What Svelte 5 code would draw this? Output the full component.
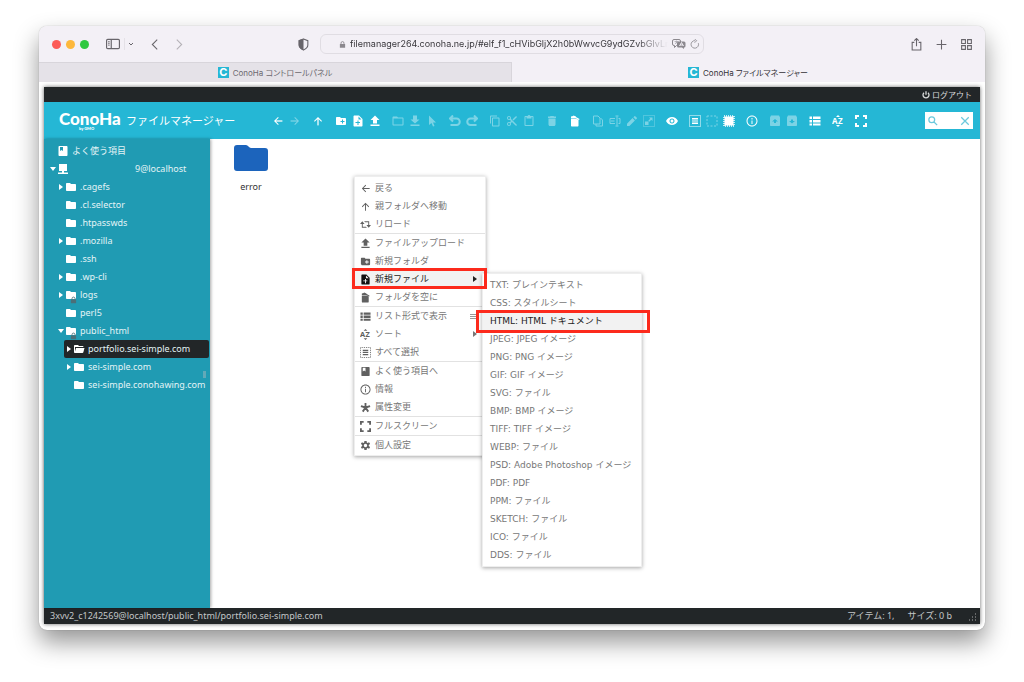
<script lang="ts">
  type Shape = { d?: string; line?: string; width?: number; dash?: string };

  const icons: Record<string, Shape> = {
    back: { d: 'M21 11H7.83l5.59-5.59L12 4l-8 8 8 8 1.41-1.41L7.83 13H21v-2z', line: 'M7 12h13', width: 1 },
    forward: { d: 'M12 4l-1.41 1.41L16.17 11H3v2h13.17l-5.58 5.59L12 20l8-8z', line: 'M4 12h13', width: 1 },
    up: { d: 'M4 12l1.41 1.41L11 7.83V21h2V7.83l5.58 5.59L20 12l-8-8-8 8z', line: 'M12 7v13', width: 1 },
    reload: { d: 'M5 5L0 11h4v8h11l-2-2H6v-6h4zM9 5l2 2h7v6h-4l5 6 5-6h-4V5z' },
    mkdir: {
      d: 'M20 6h-8l-2-2H4c-1.1 0-2 .9-2 2v12c0 1.1.9 2 2 2h16c1.1 0 2-.9 2-2V8c0-1.1-.9-2-2-2zm-1 8h-3v3h-2v-3h-3v-2h3V9h2v3h3v2z'
    },
    mkfile: {
      d: 'M14 1H5c-1.1 0-2 .9-2 2v18c0 1.1.9 2 2 2h14c1.1 0 2-.9 2-2V8l-7-7zm2 15h-3v4h-2v-4H7v-2h4v-3h2v3h3v2zm-3-7V3l6 6h-6z'
    },
    upload: { d: 'M3 22h18v-3H3v3zm5-5h8v-7h5l-9-9-9 9h5v7z' },
    open: {
      d: 'M21 5h-9l-2-2H3c-1.1 0-2 .9-2 2v14c0 1.1.9 2 2 2h18c1.1 0 2-.9 2-2V7c0-1.1-.9-2-2-2zm0 14H3V7h18v12z'
    },
    download: { d: 'M21 9h-5V1H8v8H3l9 8 9-8zM3 19v3h18v-3H3z' },
    cursor: { d: 'M6 1v19l5-4 3 7 3-1-3-7h6z' },
    undo: { line: 'M2 7h13a5 5 0 010 13H3M8 1L2 7l6 6', width: 4 },
    redo: { line: 'M22 7H9a5 5 0 000 13h12M16 1l6 6-6 6', width: 4 },
    copy: {
      d: 'M16 1H4c-1.1 0-2 .9-2 2v14h2V3h12V1zm3 4H8c-1.1 0-2 .9-2 2v14c0 1.1.9 2 2 2h11c1.1 0 2-.9 2-2V7c0-1.1-.9-2-2-2zm0 16H8V7h11v14z'
    },
    cut: {
      d: 'M9.64 7.64c.23-.5.36-1.05.36-1.64 0-2.21-1.79-4-4-4S2 3.79 2 6s1.79 4 4 4c.59 0 1.14-.13 1.64-.36L10 12l-2.36 2.36C7.14 14.13 6.59 14 6 14c-2.21 0-4 1.79-4 4s1.79 4 4 4 4-1.79 4-4c0-.59-.13-1.14-.36-1.64L12 14l7 7h3v-1L9.64 7.64zM6 8c-1.1 0-2-.89-2-2s.9-2 2-2 2 .89 2 2-.9 2-2 2zm0 12c-1.1 0-2-.89-2-2s.9-2 2-2 2 .89 2 2-.9 2-2 2zM19 3l-6 6 2 2 7-7V3z'
    },
    paste: {
      d: 'M19 2h-4.18C14.4.84 13.3 0 12 0s-2.4.84-2.82 2H5c-1.1 0-2 .9-2 2v16c0 1.1.9 2 2 2h14c1.1 0 2-.9 2-2V4c0-1.1-.9-2-2-2zm0 18H5V4h2v3h10V4h2v16z'
    },
    trash: { d: 'M5 19c0 1.7 1.3 3 3 3h8c1.7 0 3-1.3 3-3V7H5v12zM20 3h-4l-1-1H9L8 3H4v3h16V3z' },
    empty: { d: 'M4 8h11l4 2v11c0 1.1-.9 2-2 2H6c-1.1 0-2-.9-2-2zM4 3l4-1 1-1 5 2v1l7 4-1 2-6-3H4z' },
    duplicate: { line: 'M3 18V2h9l4 4v12zM8 18v4h13V10l-4-4', width: 2 },
    rename: { line: 'M12 7H2v10h10M4 12h7M16 3v18M13 2h6M13 22h6M19 7h3v10h-3', width: 2 },
    edit: {
      d: 'M2 17.25V22h4.75L17.81 10.94l-4.75-4.75L2 17.25zM21.7 7.04c.4-.39.4-1.02 0-1.41l-3.3-3.34c-.4-.39-1-.39-1.4 0l-2.3 2.33 4.7 4.75 2.3-2.33z'
    },
    resize: { line: 'M1 1h22v22H1z', dash: '2 2', width: 2, d: 'M12 5h7v7l-2.5-2.500-4 4-2-2 4-4zM4 13h7v7H4z' },
    eye: {
      d: 'M12 4C7 4 2.7 7.1 0 12c2.7 4.9 7 8 12 8s9.3-3.1 12-8c-2.7-4.9-7-8-12-8zm0 13c-2.760 0-5-2.240-5-5s2.240-5 5-5 5 2.240 5 5-2.240 5-5 5zm0-8c-1.660 0-3 1.340-3 3s1.340 3 3 3 3-1.340 3-3-1.340-3-3-3z'
    },
    selectall: { line: 'M1 1h22v22H1z', dash: '2 2', width: 2, d: 'M6 6h12v3H6zM6 11h12v2H6zM6 15h12v3H6z' },
    selectnone: { line: 'M2 2h20v20H2z', dash: '4 3', width: 2 },
    invert: { line: 'M2 2h20v20H2z', dash: '2 2', width: 3, d: 'M3 3h18v18H3z' },
    info: {
      d: 'M11 6h2v3h-2zm0 5h2v7h-2zm1-10C5.9 1 1 5.900 1 12s4.900 11 11 11 11-4.900 11-11S18.100 1 12 1zm0 20c-5 0-9-4-9-9s4-9 9-9 9 4 9 9-4 9-9 9z'
    },
    extract: { d: 'M4 1h16l2 4v15c0 1.100-.9 2-2 2H4c-1.100 0-2-.9-2-2V5zM12 8l-6 5h4v3h4v-3h4z' },
    archive: { d: 'M4 1h16l2 4v15c0 1.100-.9 2-2 2H4c-1.100 0-2-.9-2-2V5zM12 17l6-5h-4V9h-4v3H6z' },
    list: { d: 'M1 3h5v5H1zM8 3h15v5H8zM1 10h5v5H1zM8 10h15v5H8zM1 17h5v4H1zM8 17h15v4H8z' },
    fullscreen: { line: 'M2 8V2h6M16 2h6v6M22 16v6h-6M8 22H2v-6', width: 4 },
    book: { d: 'M19 2H5c-1.100 0-2 .9-2 2v16c0 1.100.9 2 2 2h14c1.100 0 2-.9 2-2V4c0-1.100-.9-2-2-2zM6 4h6v8l-3-2-3 2z' },
    host: { d: 'M4 2h16v14H4zM10 16h4v3h8v3H2v-3h8z' },
    folder: { d: 'M10 4H4c-1.1 0-2 .9-2 2v12c0 1.1.9 2 2 2h16c1.1 0 2-.9 2-2V8c0-1.1-.9-2-2-2h-8l-2-2z' },
    folderopen: {
      d: 'M19 20H4c-1.100 0-2-.9-2-2V6c0-1.100.9-2 2-2h6l2 2h7c1.100 0 2 .9 2 2H4v9l2-7h17l-2.300 8.500c-.2.9-1 1.500-1.700 1.500z'
    },
    star: { line: 'M12 12V2M12 12L2 9M12 12l10-3M12 12L6 21M12 12l6 9', width: 4 },
    gear: {
      d: 'M19.14 12.94c.04-.3.06-.61.06-.94 0-.32-.02-.64-.07-.94l2.03-1.58c.18-.14.23-.41.12-.61l-1.92-3.32c-.12-.22-.37-.29-.59-.22l-2.39.96c-.5-.38-1.03-.7-1.62-.94l-.36-2.54c-.04-.24-.24-.41-.48-.41h-3.84c-.24 0-.43.17-.47.41l-.36 2.54c-.59.24-1.13.57-1.62.94l-2.39-.96c-.22-.08-.47 0-.59.22L2.74 8.87c-.12.21-.08.47.12.61l2.03 1.58c-.05.3-.09.63-.09.94s.02.64.07.94l-2.03 1.58c-.18.14-.23.41-.12.61l1.92 3.32c.12.22.37.29.59.22l2.39-.96c.5.38 1.03.7 1.62.94l.36 2.54c.05.24.24.41.48.41h3.84c.24 0 .44-.17.47-.41l.36-2.54c.59-.24 1.13-.56 1.62-.94l2.39.96c.22.08.47 0 .59-.22l1.92-3.32c.12-.22.07-.47-.12-.61l-2.01-1.58zM12 15.6c-1.98 0-3.6-1.62-3.6-3.6s1.62-3.6 3.6-3.6 3.6 1.62 3.6 3.6-1.62 3.6-3.6 3.6z',
      line: 'M12 2v4M12 18v4M3 7l4 2M17 15l4 2M3 17l4-2M17 9l4-2',
      width: 3
    },
    power: { line: 'M12 1v10M6 5a9 9 0 1012 0', width: 4 },
    search: { line: 'M15 15l7 7M16 9A7 7 0 112 9a7 7 0 0114 0z', width: 3 },
    close: { line: 'M3 3l18 18M21 3L3 21', width: 3 },
    lock: { d: 'M3 10h18v13H3z', line: 'M7 10V7a5 5 0 0110 0v3', width: 3 },
    sidebar: {
      line: 'M3 4h18a2 2 0 012 2v12a2 2 0 01-2 2H3a2 2 0 01-2-2V6a2 2 0 012-2zM9 4v16M4 8h2M4 11h2M4 14h2',
      width: 2
    },
    down: { line: 'M4 8l8 8 8-8', width: 4 },
    prev: { line: 'M17 3l-9 9 9 9', width: 2 },
    next: { line: 'M7 3l9 9-9 9', width: 2 },
    shield: { d: 'M12 1L3 4v9c0 5 4 8 9 10z', line: 'M12 2l8 3v8c0 4-3 7-8 9-5-2-8-5-8-9V5z', width: 2 },
    refresh: { line: 'M12 4a9 9 0 108 6M11 0l5 4-5 5', width: 2 },
    share: { line: 'M8 8H4v14h16V8h-4M12 15V2M8 5l4-4 4 4', width: 2 },
    plus: { line: 'M12 3v18M3 12h18', width: 2 },
    grid: { line: 'M3 3h7v7H3zM14 3h7v7h-7zM3 14h7v7H3zM14 14h7v7h-7z', width: 2 }
  };

  // a leading "-" marks a disabled tool
  const tools = [
    ['back', '-forward'],
    ['up'],
    ['mkdir', 'mkfile', 'upload'],
    ['-open', '-download', '-cursor'],
    ['-undo', '-redo'],
    ['-copy', '-cut', '-paste'],
    ['-trash'],
    ['empty'],
    ['-duplicate', '-rename', '-edit', '-resize'],
    ['eye'],
    ['selectall', '-selectnone', 'invert'],
    ['info'],
    ['-extract', '-archive'],
    ['list'],
    ['sort'],
    ['fullscreen']
  ];

  type Node = { name: string; arrow?: 'closed' | 'open'; locked?: boolean; selected?: boolean; children?: Node[] };

  const tree: Node[] = [
    { name: '.cagefs', arrow: 'closed' },
    { name: '.cl.selector' },
    { name: '.htpasswds' },
    { name: '.mozilla', arrow: 'closed' },
    { name: '.ssh' },
    { name: '.wp-cli', arrow: 'closed' },
    { name: 'logs', arrow: 'closed', locked: true },
    { name: 'perl5' },
    {
      name: 'public_html',
      arrow: 'open',
      locked: true,
      children: [
        { name: 'portfolio.sei-simple.com', arrow: 'closed', selected: true },
        { name: 'sei-simple.com', arrow: 'closed' },
        { name: 'sei-simple.conohawing.com' }
      ]
    }
  ];

  const menu = [
    [
      { icon: 'back', label: '戻る' },
      { icon: 'up', label: '親フォルダへ移動' },
      { icon: 'reload', label: 'リロード' }
    ],
    [
      { icon: 'upload', label: 'ファイルアップロード' },
      { icon: 'mkdir', label: '新規フォルダ' },
      { icon: 'mkfile', label: '新規ファイル', extra: 'arrow', active: true },
      { icon: 'empty', label: 'フォルダを空に' }
    ],
    [
      { icon: 'list', label: 'リスト形式で表示', extra: 'bars' },
      { icon: 'sort', label: 'ソート', extra: 'arrow' },
      { icon: 'selectall', label: 'すべて選択' }
    ],
    [
      { icon: 'book', label: 'よく使う項目へ' },
      { icon: 'info', label: '情報' },
      { icon: 'star', label: '属性変更' }
    ],
    [{ icon: 'fullscreen', label: 'フルスクリーン' }],
    [{ icon: 'gear', label: '個人設定' }]
  ];

  const fileTypes = [
    'TXT: プレインテキスト',
    'CSS: スタイルシート',
    'HTML: HTML ドキュメント',
    'JPEG: JPEG イメージ',
    'PNG: PNG イメージ',
    'GIF: GIF イメージ',
    'SVG: ファイル',
    'BMP: BMP イメージ',
    'TIFF: TIFF イメージ',
    'WEBP: ファイル',
    'PSD: Adobe Photoshop イメージ',
    'PDF: PDF',
    'PPM: ファイル',
    'SKETCH: ファイル',
    'ICO: ファイル',
    'DDS: ファイル'
  ];

  let url = $state('filemanager264.conoha.ne.jp/#elf_f1_cHVibGljX2h0bWwvcG9ydGZvbGlvLnNlaS1zaW1wbGUuY29t');
  let query = $state('');
</script>

{#snippet icon(name: string)}
  <svg class="icon" viewBox="0 0 24 24" aria-hidden="true">
    {#if name === 'sort'}
      <text x="0" y="18" font-size="16">A</text>
      <text x="12" y="18" font-size="16">Z</text>
      <path d="M8 4l4-4 4 4zM8 20l4 4 4-4z" fill="currentColor" />
    {:else}
      {#if icons[name].d}
        <path d={icons[name].d} fill="currentColor" fill-rule="evenodd" />
      {/if}
      {#if icons[name].line}
        <path
          d={icons[name].line}
          fill="none"
          stroke="currentColor"
          stroke-width={icons[name].width}
          stroke-dasharray={icons[name].dash}
        />
      {/if}
    {/if}
  </svg>
{/snippet}

{#snippet branch(nodes: Node[])}
  <ul class="branch">
    {#each nodes as node}
      <li>
        <a class="node" class:selected={node.selected} href="#{node.name}">
          <span class="twist {node.arrow ?? ''}"></span>
          <span class="node-icon">
            {@render icon(node.selected ? 'folderopen' : 'folder')}
            {#if node.locked}<span class="locked">{@render icon('lock')}</span>{/if}
          </span>
          <span>{node.name}</span>
        </a>
        {#if node.children}{@render branch(node.children)}{/if}
      </li>
    {/each}
  </ul>
{/snippet}

<div class="desktop">
  <div class="window">
    <header class="chrome">
      <div class="chrome-side">
        <span class="lights"><i class="red"></i><i class="amber"></i><i class="green"></i></span>
        <button class="cbtn wide" aria-label="Sidebar">{@render icon('sidebar')}</button>
        <button class="cbtn small" aria-label="Tab groups">{@render icon('down')}</button>
        <button class="cbtn prev" aria-label="Back">{@render icon('prev')}</button>
        <button class="cbtn next" aria-label="Forward">{@render icon('next')}</button>
        <button class="cbtn shield" aria-label="Privacy">{@render icon('shield')}</button>
      </div>
      <div class="address">
        <span class="lock">{@render icon('lock')}</span>
        <input aria-label="Address" bind:value={url} />
        <svg class="translate" viewBox="0 0 28 20" aria-hidden="true">
          <path d="M4 1h10a3 3 0 013 3v6a3 3 0 01-3 3H9l-4 4v-4H4a3 3 0 01-3-3V4a3 3 0 013-3z" fill="none" stroke="currentColor" stroke-width="2" />
          <path d="M5 5h8M9 3v2M6 10l5-5M7 6l5 4" stroke="currentColor" fill="none" />
          <path d="M13 5h11a3 3 0 013 3v6a3 3 0 01-3 3v3l-4-3h-7a3 3 0 01-3-3V8a3 3 0 013-3z" fill="currentColor" />
          <path d="M15 14l4-7 4 7M16 12h6" stroke="#f3f0f6" fill="none" stroke-width="2" />
        </svg>
        <button class="cbtn refresh" aria-label="Reload">{@render icon('refresh')}</button>
      </div>
      <div class="chrome-side end">
        <button class="cbtn" aria-label="Share">{@render icon('share')}</button>
        <button class="cbtn" aria-label="New tab">{@render icon('plus')}</button>
        <button class="cbtn" aria-label="Tab overview">{@render icon('grid')}</button>
      </div>
    </header>

    <nav class="tabs">
      <a class="tab" href="#panel"><span class="favicon">C</span>ConoHa コントロールパネル</a>
      <a class="tab current" href="#files"><span class="favicon">C</span>ConoHa ファイルマネージャー</a>
    </nav>

    <div class="page">
      <div class="app">
        <div class="account">
          <a class="logout" href="#logout">{@render icon('power')}ログアウト</a>
        </div>

        <div class="toolbar">
          <div class="brand">
            <span class="logo">ConoHa<small>by GMO</small></span>
            <span class="product">ファイルマネージャー</span>
          </div>
          <div class="tools">
            {#each tools as group}
              <div class="group">
                {#each group as tool}
                  {@const name = tool.replace('-', '')}
                  <button class="tool" disabled={tool.startsWith('-')} aria-label={name}>{@render icon(name)}</button>
                {/each}
              </div>
            {/each}
          </div>
          <div class="search">
            {@render icon('search')}
            <input aria-label="Search" bind:value={query} />
            <button aria-label="Clear search">{@render icon('close')}</button>
          </div>
        </div>

        <div class="main">
          <aside class="sidebar">
            <a class="node" href="#places">
              <span class="twist"></span>
              <span class="node-icon">{@render icon('book')}</span>
              <span>よく使う項目</span>
            </a>
            <a class="node" href="#root">
              <span class="twist open"></span>
              <span class="node-icon">{@render icon('host')}</span>
              <span class="host">9@localhost</span>
            </a>
            {@render branch(tree)}
            <span class="thumb"></span>
          </aside>

          <section class="files">
            <button class="file">
              <svg viewBox="0 0 34 28" aria-hidden="true">
                <path d="M3 1h9c2 0 3 3 5 3h14a3 3 0 013 3v17a3 3 0 01-3 3H3a3 3 0 01-3-3V4a3 3 0 013-3z" fill="#1c64bc" />
              </svg>
              <span>error</span>
            </button>

            <ul class="menu context">
              {#each menu as group}
                {#each group as item, i}
                  <li class:active={item.active} class:rule={i === group.length - 1}>
                    <button class="item">
                      {@render icon(item.icon)}
                      <span>{item.label}</span>
                      {#if item.extra}<span class="extra {item.extra}"></span>{/if}
                    </button>
                    {#if item.active}
                      <ul class="menu submenu">
                        {#each fileTypes as type}
                          <li class:active={type.startsWith('HTML')}>
                            <button class="item type">{type}</button>
                          </li>
                        {/each}
                      </ul>
                    {/if}
                  </li>
                {/each}
              {/each}
            </ul>
          </section>
        </div>

        <footer class="status">
          <span>3xvv2_c1242569@localhost/public_html/portfolio.sei-simple.com</span>
          <span class="count">アイテム: 1,</span>
          <span>サイズ: 0 b</span>
          <svg class="grip" viewBox="0 0 10 10" aria-hidden="true">
            <path d="M8 2h1M8 5h1M5 5h1M8 8h1M5 8h1M2 8h1" stroke="#aaa" />
          </svg>
        </footer>
      </div>
    </div>
  </div>
</div>

<style>
  :global(body) {
    background: #fff;
  }

  .desktop {
    --cyan: #25b7d5;
    --teal: #209bb3;
    --ink: #222628;
    --mark: #fc2a1c;
    box-sizing: border-box;
    display: flex;
    min-height: 100vh;
    padding: 26px 39px 52px;
    font: 9px/18px 'Noto Sans', 'Noto Sans CJK JP', sans-serif;
  }

  button,
  input {
    min-width: 0;
    margin: 0;
    padding: 0;
    border: 0;
    background: none;
    color: inherit;
    font: inherit;
  }
  a {
    color: inherit;
    text-decoration: none;
  }
  ul {
    margin: 0;
    padding: 0;
    list-style: none;
  }

  .icon {
    display: block;
    flex: none;
    width: 12px;
    height: 12px;
  }
  .icon text {
    fill: currentColor;
    font-weight: 700;
  }

  .window {
    display: flex;
    flex: 1;
    flex-direction: column;
    min-width: 0;
    overflow: hidden;
    border-radius: 8px;
    background: #fff;
    box-shadow:
      0 0 1px rgba(0, 0, 0, 0.4),
      0 12px 24px rgba(0, 0, 0, 0.42);
  }

  .chrome {
    display: grid;
    grid-template-columns: 1fr minmax(0, 384px) 1fr;
    align-items: center;
    height: 36px;
    background: #f3f0f6;
    color: #68656b;
  }
  .chrome-side {
    display: flex;
    align-items: center;
    padding: 0 10px 0 13px;
  }
  .chrome-side.end {
    justify-content: flex-end;
    gap: 12px;
    padding: 0 12px;
  }
  .lights {
    display: flex;
    gap: 5px;
    margin-right: 17px;
  }
  .lights i {
    width: 9px;
    height: 9px;
    border-radius: 50%;
  }
  .red {
    background: #fc5b57;
  }
  .amber {
    background: #fdb83c;
  }
  .green {
    background: #2fc840;
  }
  .cbtn .icon {
    width: 13px;
    height: 13px;
  }
  .cbtn.wide .icon {
    width: 14px;
    height: 14px;
  }
  .cbtn.small {
    margin-left: 4px;
    padding-left: 3px;
    border-left: 1px solid #e4e1e7;
  }
  .cbtn.small .icon {
    width: 6px;
    height: 12px;
  }
  .cbtn.prev {
    margin-left: 14px;
  }
  .cbtn.next {
    margin-left: 12px;
    color: #b4b1b7;
  }
  .cbtn.shield {
    margin-left: auto;
  }
  .address {
    display: flex;
    align-items: center;
    gap: 4px;
    box-sizing: border-box;
    height: 20px;
    padding: 0 3px 0 18px;
    border: 1px solid #e0dde3;
    border-radius: 6px;
    color: #8b888e;
  }
  .address input {
    flex: 1;
    color: #39373c;
    font: 9px/18px Inter, sans-serif;
    mask-image: linear-gradient(to right, #000 90%, transparent 100%);
  }
  .lock .icon {
    width: 7px;
    height: 9px;
  }
  .translate {
    width: 14px;
    height: 10px;
  }
  .refresh .icon {
    width: 10px;
    height: 10px;
  }

  .tabs {
    display: grid;
    grid-template-columns: 1fr 1fr;
    height: 20px;
    background: #f3f0f6;
  }
  .tab {
    display: flex;
    align-items: center;
    justify-content: center;
    gap: 4px;
    box-sizing: border-box;
    border: 1px solid #d8d5db;
    border-width: 1px 1px 0 0;
    background: #e5e2e8;
    color: #6c696f;
    font: 8px/18px Inter, 'Noto Sans CJK JP', sans-serif;
    font-feature-settings: 'palt';
  }
  .tab.current {
    border-color: transparent;
    background: none;
    color: #333136;
  }
  .favicon {
    width: 11px;
    height: 11px;
    background: var(--cyan);
    color: #fff;
    font: 700 11px/11px Inter, sans-serif;
    text-align: center;
  }

  .page {
    display: flex;
    flex: 1;
    padding: 5px 5px 6px;
  }
  .app {
    display: flex;
    flex: 1;
    flex-direction: column;
    min-width: 0;
    background: #fff;
    box-shadow: 0 0 4px rgba(0, 0, 0, 0.6);
  }

  .account {
    display: flex;
    justify-content: flex-end;
    height: 15px;
    padding-right: 8px;
    background: var(--ink);
    color: #d8dadb;
    font-size: 8px;
    line-height: 15px;
  }
  .logout {
    display: flex;
    align-items: center;
    gap: 2px;
  }
  .logout .icon {
    width: 8px;
    height: 8px;
  }

  .toolbar {
    display: flex;
    align-items: center;
    height: 37px;
    padding: 0 7px 0 15px;
    background: var(--cyan);
    color: #fff;
  }
  .brand {
    display: flex;
    align-items: center;
    gap: 6px;
    width: 213px;
    flex: none;
  }
  .logo {
    display: flex;
    flex-direction: column;
    width: 61px;
    font: 900 17px/16px Lato, sans-serif;
  }
  .logo small {
    padding-left: 20px;
    font-size: 4px;
    line-height: 4px;
  }
  .product {
    font-size: 11px;
  }
  .tools {
    display: flex;
    flex: 1;
    gap: 10px;
  }
  .group {
    display: flex;
    gap: 4px;
  }
  .tool {
    width: 13px;
  }
  .tool:disabled {
    opacity: 0.4;
  }
  .search {
    display: flex;
    align-items: center;
    width: 42px;
    height: 17px;
    padding: 0 3px;
    background: #fff;
    color: #6cc9dd;
  }
  .search input {
    flex: 1;
    width: 10px;
    color: var(--ink);
  }
  .search .icon {
    width: 10px;
    height: 10px;
  }

  .main {
    display: flex;
    flex: 1;
  }
  .sidebar {
    position: relative;
    box-sizing: border-box;
    width: 166px;
    padding: 3px 1px 0 4px;
    background: var(--teal);
    color: #e3f3f6;
    box-shadow: 1px 0 3px rgba(0, 0, 0, 0.35);
  }
  .branch {
    padding-left: 8px;
  }
  .node {
    display: flex;
    align-items: center;
    height: 18px;
    border-radius: 2px;
    white-space: nowrap;
  }
  .node.selected {
    background: var(--ink);
  }
  .twist {
    display: flex;
    align-items: center;
    justify-content: center;
    width: 9px;
  }
  .twist.closed::before {
    content: '';
    border: 3px solid transparent;
    border-right: 0;
    border-left: 4px solid #fff;
  }
  .twist.open::before {
    content: '';
    border: 3px solid transparent;
    border-top: 4px solid #fff;
    border-bottom: 0;
  }
  .node-icon {
    position: relative;
    margin-right: 3px;
    color: #fff;
  }
  .locked {
    position: absolute;
    right: 0;
    bottom: -3px;
    color: #4c6f78;
  }
  .locked .icon {
    width: 7px;
    height: 8px;
  }
  .host {
    margin-left: 63px;
  }
  .thumb {
    position: absolute;
    top: 232px;
    right: 4px;
    width: 3px;
    height: 7px;
    background: #62a9b8;
  }

  .files {
    position: relative;
    flex: 1;
    padding: 5px 24px;
  }
  .file {
    display: flex;
    flex-direction: column;
    align-items: center;
    gap: 6px;
    width: 34px;
    color: #333;
  }
  .file svg {
    width: 34px;
    height: 28px;
  }

  .menu {
    position: absolute;
    box-sizing: border-box;
    border: 1px solid #eee;
    background: #fff;
    box-shadow: 0 1px 4px rgba(0, 0, 0, 0.35);
    color: #777;
  }
  .context {
    top: 37px;
    left: 144px;
    width: 132px;
    padding: 2px 0 1px;
  }
  .submenu {
    top: 3px;
    left: 127px;
    z-index: 1;
    width: 160px;
    padding: 2px 0;
  }
  .menu li {
    position: relative;
  }
  .context > .rule:not(:last-child) {
    border-bottom: 1px solid #e2e2e2;
  }
  .item {
    display: flex;
    align-items: center;
    gap: 4px;
    box-sizing: border-box;
    width: 100%;
    height: 18px;
    padding: 0 8px 0 5px;
    text-align: left;
    white-space: nowrap;
  }
  .item .icon {
    width: 11px;
    height: 11px;
    color: #606060;
  }
  .item.type {
    padding: 0 7px;
    font-family: 'DejaVu Sans', 'Noto Sans CJK JP', sans-serif;
  }
  .active > .item {
    background: #f2f2f2;
    color: #222;
  }
  .active > .item .icon {
    color: #111;
  }
  .active::after {
    content: '';
    position: absolute;
    inset: -2px -2px -1px -3px;
    z-index: 2;
    border: 3px solid var(--mark);
    pointer-events: none;
  }
  .submenu .active::after {
    inset: -2px -9px -3px -7px;
  }
  .extra {
    margin-left: auto;
  }
  .extra.arrow {
    border: 3px solid transparent;
    border-right: 0;
    border-left: 4px solid currentColor;
  }
  .extra.bars {
    width: 7px;
    height: 3px;
    border: 1px solid #999;
    border-width: 1px 0;
    background: linear-gradient(#999, #999) center / 100% 1px no-repeat;
  }

  .status {
    display: flex;
    align-items: center;
    height: 16px;
    padding: 0 3px 0 6px;
    background: var(--ink);
    color: #c4c7c8;
    line-height: 16px;
  }
  .count {
    margin: 0 13px 0 auto;
  }
  .grip {
    align-self: flex-end;
    width: 10px;
    height: 10px;
    margin: 0 0 2px 15px;
  }
</style>
